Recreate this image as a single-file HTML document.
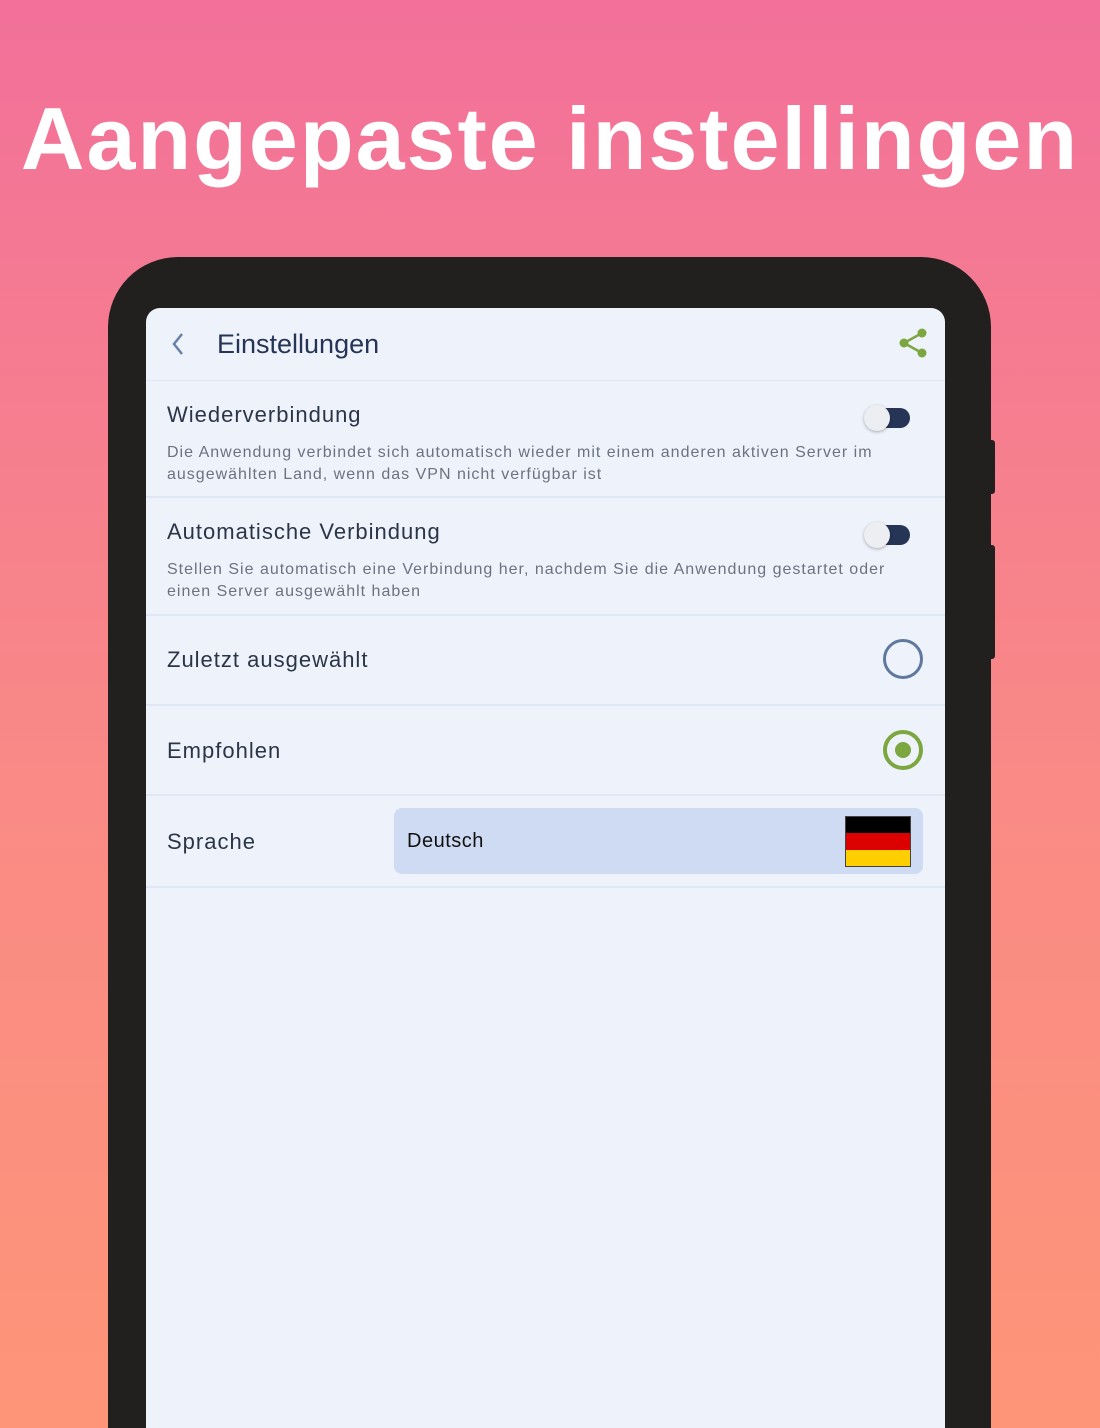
<!DOCTYPE html><html><head><meta charset="utf-8"><style>
*{margin:0;padding:0;box-sizing:border-box}
html,body{width:1100px;height:1428px;overflow:hidden}
body{position:relative;background:linear-gradient(180deg,#f2709a 0%,#f98a86 55%,#fe9578 100%);font-family:"Liberation Sans",sans-serif}
h1{position:absolute;top:88px;left:0;width:1100px;text-align:center;color:#fff;font-size:88px;font-weight:bold;letter-spacing:2px}
.phone{position:absolute;left:108px;top:257px;width:883px;height:1171px;background:#22201e;border-radius:70px 70px 0 0}
.btn{position:absolute;background:#22201e;left:985px;width:10px;border-radius:3px}
.screen{position:absolute;left:146px;top:308px;width:799px;height:1120px;background:#eef3fb;border-radius:14px 14px 0 0;color:#2a3548}
.abs{position:absolute}
.line{position:absolute;left:0;width:799px;height:2px;background:#dfe7f4}
.t{font-size:22px;color:#2a3548;position:absolute;left:21px;letter-spacing:1px}
.d{font-size:16px;color:#6b7280;position:absolute;left:21px;line-height:22px;width:770px;white-space:nowrap;letter-spacing:1px}
.tog{position:absolute;left:718px;width:46px;height:22px}
.tog .tr{position:absolute;left:8px;top:2px;width:38px;height:20px;border-radius:10px;background:#263556}
.tog .k{position:absolute;left:0;top:-1px;width:26px;height:26px;border-radius:50%;background:#eceef1;box-shadow:0 1px 3px rgba(0,0,0,.3)}
</style></head><body>
<h1>Aangepaste instellingen</h1>
<div class="phone"></div>
<div class="btn" style="top:440px;height:54px"></div>
<div class="btn" style="top:545px;height:114px"></div>
<div class="screen">
<svg class="abs" style="left:24px;top:24px" width="16" height="24"><path d="M12 2 L4 12 L12 22" stroke="#6a7fa8" stroke-width="2.5" fill="none"/></svg>
<div class="abs" style="left:71px;top:21px;font-size:27px;color:#263556">Einstellungen</div>
<svg class="abs" style="left:752px;top:20px" width="30" height="30"><g fill="#7ca63f"><circle cx="24" cy="5" r="4.5"/><circle cx="6" cy="15" r="4.5"/><circle cx="24" cy="25" r="4.5"/></g><path d="M24 5 L6 15 L24 25" stroke="#7ca63f" stroke-width="2.5" fill="none"/></svg>
<div class="line" style="top:72px;height:1px"></div>
<div class="t" style="top:94px">Wiederverbindung</div>
<div class="tog" style="top:98px"><div class="tr"></div><div class="k"></div></div>
<div class="d" style="top:134px">Die Anwendung verbindet sich automatisch wieder mit einem anderen aktiven Server im<br>ausgewählten Land, wenn das VPN nicht verfügbar ist</div>
<div class="line" style="top:188px"></div>
<div class="t" style="top:211px">Automatische Verbindung</div>
<div class="tog" style="top:215px"><div class="tr"></div><div class="k"></div></div>
<div class="d" style="top:251px">Stellen Sie automatisch eine Verbindung her, nachdem Sie die Anwendung gestartet oder<br>einen Server ausgewählt haben</div>
<div class="line" style="top:306px"></div>
<div class="t" style="top:339px">Zuletzt ausgewählt</div>
<div class="abs" style="left:737px;top:331px;width:40px;height:40px;border:3px solid #5f789f;border-radius:50%"></div>
<div class="line" style="top:396px"></div>
<div class="t" style="top:430px">Empfohlen</div>
<div class="abs" style="left:737px;top:422px;width:40px;height:40px;border:4px solid #7ca63f;border-radius:50%"><div style="position:absolute;left:8px;top:8px;width:16px;height:16px;border-radius:50%;background:#7ca63f"></div></div>
<div class="line" style="top:486px"></div>
<div class="t" style="top:521px">Sprache</div>
<div class="abs" style="left:248px;top:500px;width:529px;height:66px;background:#cfdbf2;border-radius:8px"></div>
<div class="abs" style="left:261px;top:522px;font-size:20px;color:#111;letter-spacing:0.5px">Deutsch</div>
<div class="abs" style="left:699px;top:508px;width:66px;height:51px;border:1px solid #444"><div style="height:33.3%;background:#000"></div><div style="height:33.3%;background:#dd0000"></div><div style="height:33.4%;background:#ffce00"></div></div>
<div class="line" style="top:578px"></div>
</div>
</body></html>
